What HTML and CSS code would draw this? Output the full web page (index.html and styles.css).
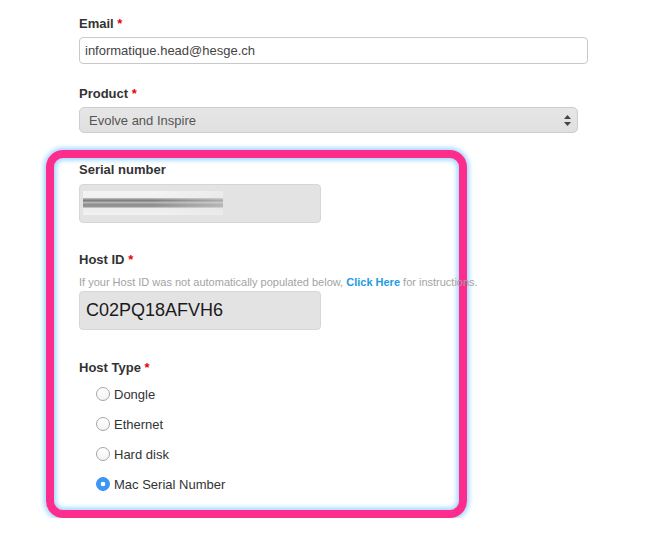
FILE: index.html
```html
<!DOCTYPE html>
<html lang="en">
<head>
<meta charset="UTF-8">
<title>License request</title>
<link rel="stylesheet" href="styles.css">
</head>
<body>

  <form class="form">
    <div class="field email-field">
      <label class="label">Email <span class="req">*</span></label>
      <input class="text-input email" type="text" value="informatique.head@hesge.ch">
    </div>

    <div class="field product-field">
      <label class="label">Product <span class="req">*</span></label>
      <div class="select">
        <span>Evolve and Inspire</span>
        <svg class="arrows" width="7" height="11" viewBox="0 0 7 11">
          <path d="M3.5 0 L7 4 L0 4 Z" fill="#444"/>
          <path d="M0 7 L7 7 L3.5 11 Z" fill="#444"/>
        </svg>
      </div>
    </div>

    <!-- the pink frame round the license fields -->
    <div class="highlight">
      <div class="field serial">
        <label class="label">Serial number</label>
        <div class="text-input locked">
          <span class="blurred"></span>
        </div>
      </div>

      <div class="field host-id">
        <label class="label">Host ID <span class="req">*</span></label>
        <p class="help">If your Host ID was not automatically populated below, <a href="#">Click Here</a> for instructions.</p>
        <div class="text-input locked big">C02PQ18AFVH6</div>
      </div>

      <div class="field host-type">
        <label class="label">Host Type <span class="req">*</span></label>
        <div class="radios">
          <label class="radio"><input type="radio" name="host"> Dongle</label>
          <label class="radio"><input type="radio" name="host"> Ethernet</label>
          <label class="radio"><input type="radio" name="host"> Hard disk</label>
          <label class="radio"><input type="radio" name="host" checked> Mac Serial Number</label>
        </div>
      </div>
    </div>
  </form>

</body>
</html>
```

FILE: styles.css
```css
:root {
  --texto: #333;
  --gris-borde: #c9c9c9;
  --gris-fondo: #e3e3e3;
  --rosa: #fd2d8d;
  --brillo: #9ad3ff;
}
html, body {
  margin: 0;
  padding: 0;
  background: #fff;
  font-family: "Helvetica Neue", Helvetica, "Liberation Sans", Arial, sans-serif;
  color: var(--texto);
}
.form {
  padding: 15px 0 0 79px;
  margin: 0;
}
.field {
  margin-bottom: 20px;
}
.label {
  display: block;
  font-size: 13px;
  font-weight: bold;
  line-height: 18px;
  margin-bottom: 5px;
  color: #333;
}
.email-field {
  margin-bottom: 21px;
}
.email-field .label,
.product-field .label {
  margin-bottom: 4px;
}
.product-field {
  margin-bottom: 17px;
}
.req {
  color: #e8000b;
}
.text-input {
  box-sizing: border-box;
  display: flex;
  align-items: center;
  font-family: inherit;
  font-size: 13px;
  color: #444;
  border: 1px solid var(--gris-borde);
  border-radius: 4px;
  background: #fff;
  margin: 0;
  outline: none;
}
.email {
  width: 509px;
  height: 27px;
  padding: 0 5px;
}
.select {
  box-sizing: border-box;
  width: 499px;
  height: 26px;
  display: flex;
  align-items: center;
  justify-content: space-between;
  padding: 0 6px 0 9px;
  font-size: 13px;
  color: #555;
  background: linear-gradient(#e6e6e6, #e0e0e0);
  border: 1px solid #cdcdcd;
  border-radius: 5px;
}
.arrows {
  display: block;
}
.highlight {
  box-sizing: border-box;
  width: 421px;
  margin: 0 0 0 -33px;
  padding: 3px 0 16px 25px;
  border: 8px solid var(--rosa);
  border-radius: 17px;
  box-shadow: 0 0 5px 2px var(--brillo), inset 0 0 5px 2px var(--brillo);
}
.locked {
  width: 242px;
  height: 39px;
  background: var(--gris-fondo);
  border-color: #d6d6d6;
}
.blurred {
  display: block;
  width: 140px;
  height: 24px;
  margin: -2px 0 0 3px;
  background: linear-gradient(#f4f4f4 0, #f0f0f0 28%, #a8a8a8 32%, #7d7d7d 40%, #b4b4b4 48%, #8a8a8a 58%, #9a9a9a 66%, #ececec 72%, #f2f2f2 100%);
  -webkit-mask-image: linear-gradient(to right, #000 50%, rgba(0,0,0,0.55) 100%);
  mask-image: linear-gradient(to right, #000 50%, rgba(0,0,0,0.55) 100%);
  filter: blur(0.6px);
}
.host-id {
  margin-top: 28px;
}
.host-id .label {
  margin-bottom: 6px;
}
.help {
  margin: 0 0 2px;
  font-size: 11px;
  line-height: 14px;
  color: #a3a3a3;
  white-space: nowrap;
}
.help a {
  color: #1d9ae3;
  font-weight: bold;
  text-decoration: none;
}
.big {
  font-size: 18px;
  color: #1a1a1a;
  padding-left: 6px;
}
.host-type {
  margin: 29px 0 0;
}
.host-type .label {
  margin-bottom: 7px;
}
.radios {
  display: flex;
  flex-direction: column;
  gap: 10px;
  padding-left: 17px;
}
.radio {
  display: flex;
  align-items: center;
  height: 20px;
  font-size: 13px;
  color: #333;
}
.radio input {
  -webkit-appearance: none;
  appearance: none;
  box-sizing: border-box;
  width: 14px;
  height: 14px;
  margin: 0 4px 0 0;
  border: 1px solid #a6a6a6;
  border-radius: 50%;
  background: linear-gradient(#fff, #f3f3f3);
}
.radio input:checked {
  border-color: #3a8ef0;
  background: radial-gradient(circle, #fff 0 2px, #3d97f6 2.6px);
}
```
